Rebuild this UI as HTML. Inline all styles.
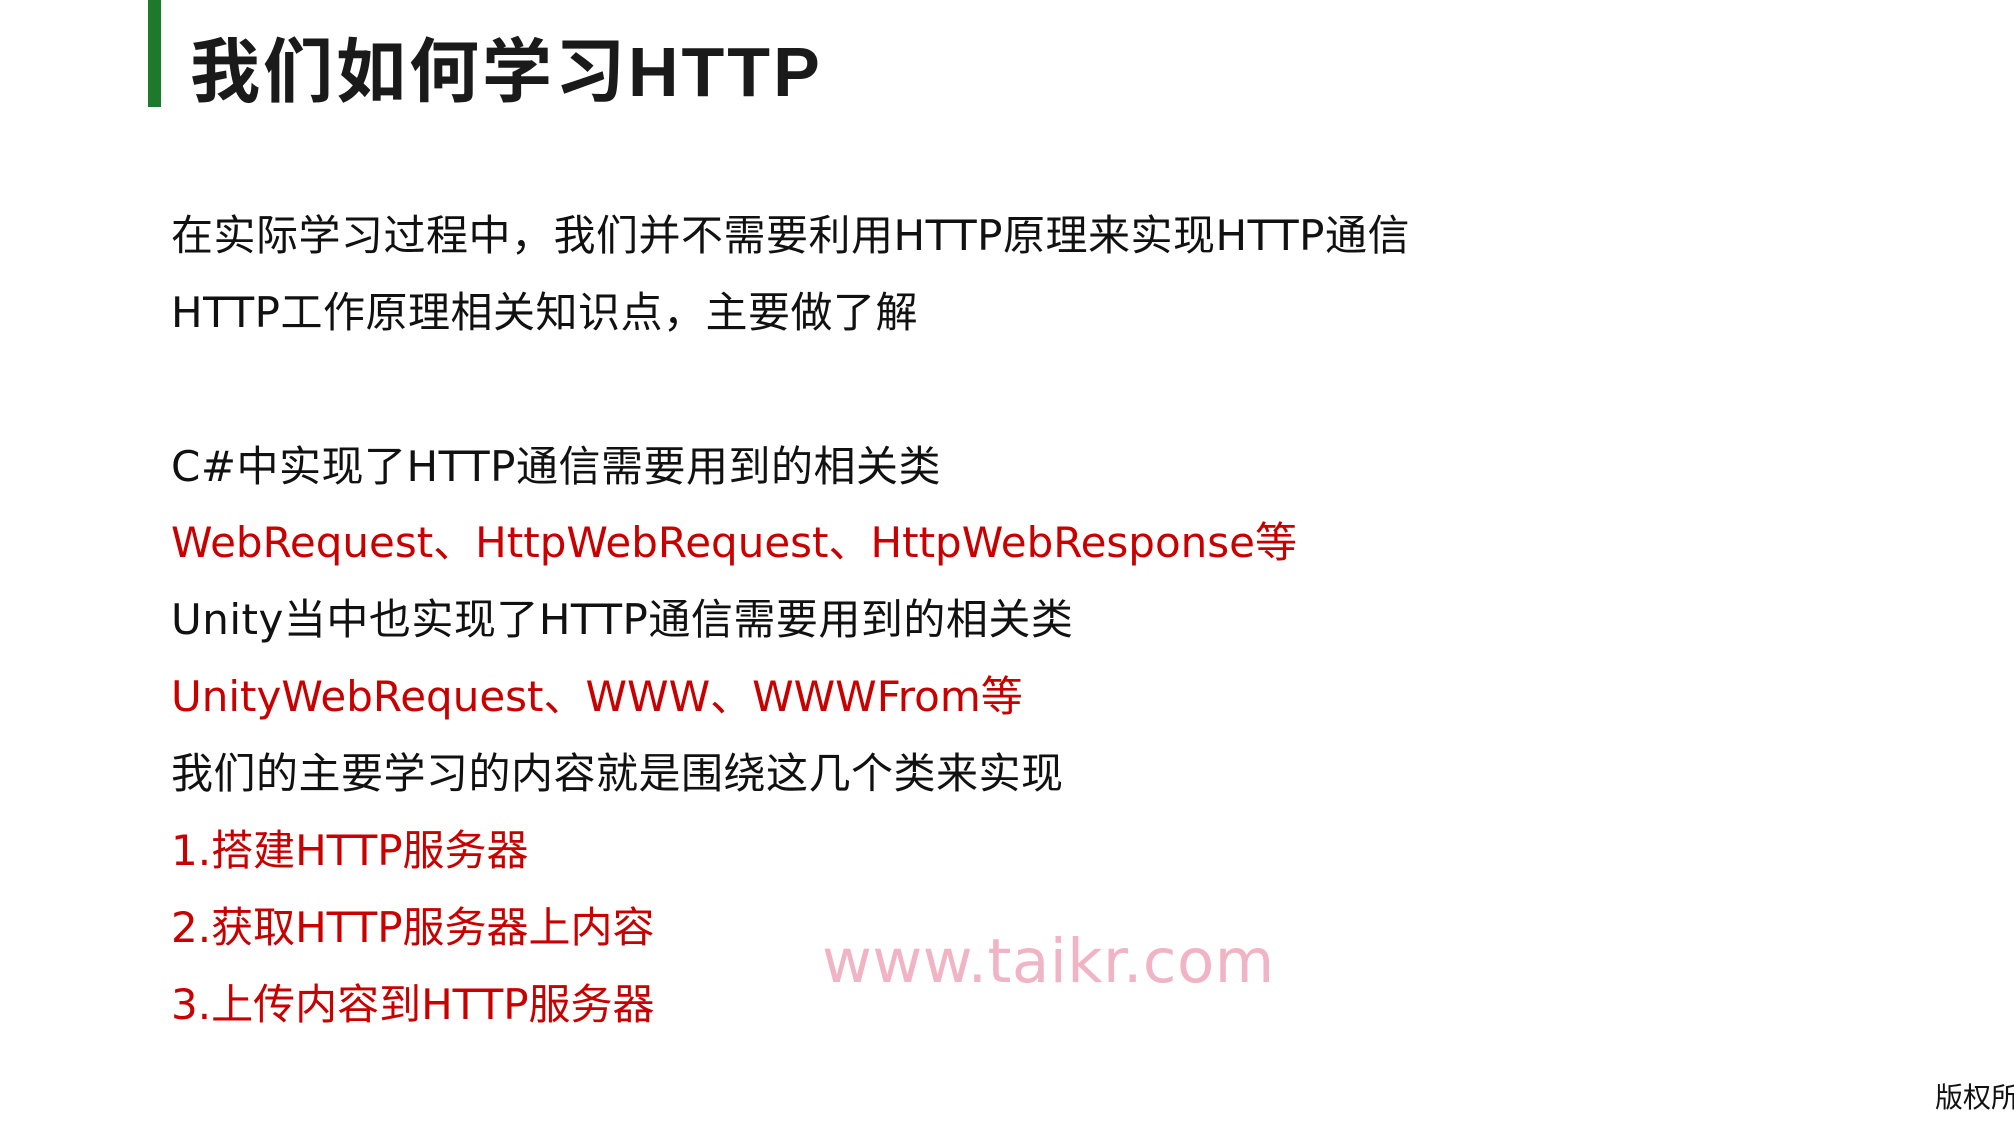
<!DOCTYPE html>
<html><head><meta charset="utf-8"><style>
html,body{margin:0;padding:0;background:#fff;width:2014px;height:1125px;overflow:hidden;position:relative}
.bar{position:absolute;left:148px;top:0;width:13px;height:107px;background:#1e7a2a}
.t{position:absolute;left:190px;top:16px;font:bold 70px "Liberation Sans","Noto Sans CJK SC",sans-serif;color:#1a1a1a;white-space:nowrap;letter-spacing:3px}
.l{position:absolute;left:171px;font:42px "DejaVu Sans","Noto Sans CJK SC",sans-serif;color:#111;white-space:nowrap;line-height:50px;letter-spacing:0.5px}
.r{color:#c80000;letter-spacing:0}
.wm{position:absolute;left:822px;top:926px;font:61px "DejaVu Sans",sans-serif;color:#f0b4c4;white-space:nowrap;letter-spacing:0.5px}
.c{position:absolute;left:1935px;top:1076px;font:28px "Liberation Sans","Noto Sans CJK SC",sans-serif;color:#111;white-space:nowrap}
</style></head><body>
<div class="bar"></div>
<div class="t">我们如何学习HTTP</div>
<div class="l" style="top:211px">在实际学习过程中，我们并不需要利用HTTP原理来实现HTTP通信</div>
<div class="l" style="top:288px">HTTP工作原理相关知识点，主要做了解</div>
<div class="l" style="top:442px">C#中实现了HTTP通信需要用到的相关类</div>
<div class="l r" style="top:518px">WebRequest、HttpWebRequest、HttpWebResponse等</div>
<div class="l" style="top:595px">Unity当中也实现了HTTP通信需要用到的相关类</div>
<div class="l r" style="top:672px">UnityWebRequest、WWW、WWWFrom等</div>
<div class="l" style="top:749px">我们的主要学习的内容就是围绕这几个类来实现</div>
<div class="l r" style="top:826px">1.搭建HTTP服务器</div>
<div class="l r" style="top:903px">2.获取HTTP服务器上内容</div>
<div class="l r" style="top:980px">3.上传内容到HTTP服务器</div>
<div class="wm">www.taikr.com</div>
<div class="c">版权所</div>
</body></html>
